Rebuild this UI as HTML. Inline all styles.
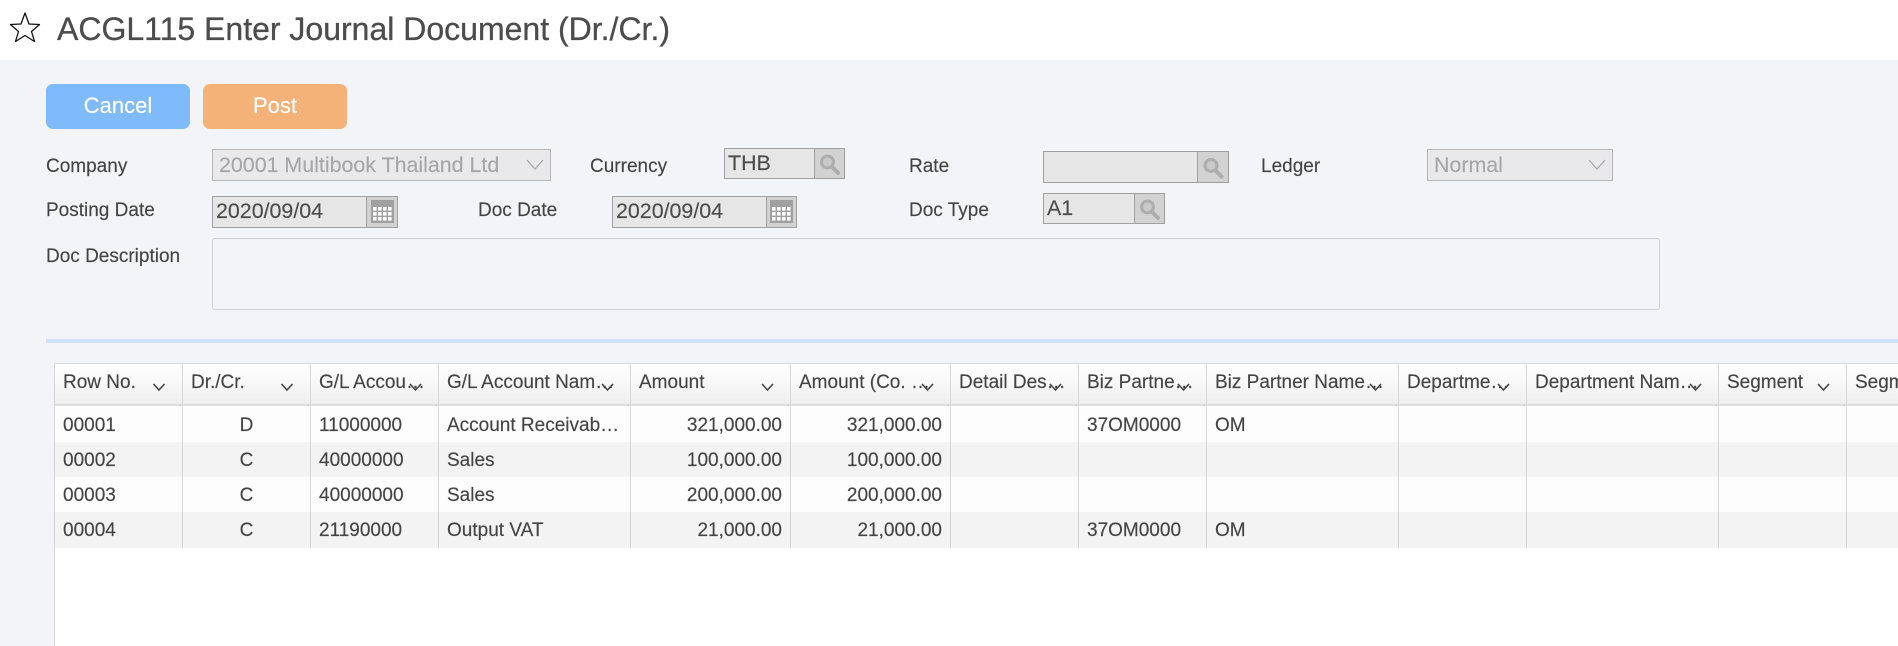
<!DOCTYPE html>
<html><head><meta charset="utf-8"><title>ACGL115</title>
<style>
html,body{margin:0;padding:0;width:1898px;height:646px;overflow:hidden;background:#f3f4f8;}
body{position:relative;font-family:"Liberation Sans",Arial,sans-serif;color:#444;font-size:19px;-webkit-text-stroke:0.15px currentColor;}
.a{position:absolute;box-sizing:border-box;white-space:nowrap;}
.lb{position:absolute;white-space:nowrap;line-height:24px;height:24px;color:#444;font-size:19px;}
.btn{position:absolute;top:84px;height:45px;width:144px;border-radius:7px;color:#fff;font-size:22px;line-height:43px;text-align:center;}
.inp{position:absolute;box-sizing:border-box;background:#e6e6e6;border:1px solid #a0a0a0;font-size:21.4px;color:#4c4c4c;padding-left:3px;white-space:nowrap;}
.ib{position:absolute;box-sizing:border-box;background:#d2d2d2;border:1px solid #a0a0a0;}
.sel{position:absolute;box-sizing:border-box;background:#e9e9eb;border:1px solid #b6b6b6;font-size:21.4px;color:#a6a6a6;padding-left:6px;line-height:30px;white-space:nowrap;}
.hc{position:absolute;top:365px;height:40px;font-size:19px;line-height:36px;padding-left:8px;box-sizing:border-box;white-space:nowrap;overflow:hidden;text-overflow:ellipsis;color:#444;}
.vh{position:absolute;top:364px;height:41px;width:1px;background:#d9d9d9;}
.v{position:absolute;top:407px;height:141px;width:1px;background:#d6d6d6;}
.r{position:absolute;left:55px;width:1843px;height:35px;}
.c{position:absolute;height:35px;line-height:37px;font-size:19px;white-space:nowrap;color:#444;}
svg{position:absolute;overflow:visible;}
</style></head><body>

<div class="a" style="left:0;top:0;width:1898px;height:60px;background:#fff;"></div>
<svg style="left:0;top:0" width="50" height="50"><polygon points="25,13 29,24 39.5,24.500 31.5,31.500 34.500,41.500 25,35.500 15.500,41.500 18.500,31.500 10.500,24.500 21,24" fill="none" stroke="#111" stroke-width="1.3" stroke-linejoin="round"/></svg>
<div class="a" style="left:57px;top:9px;font-size:32px;line-height:40px;color:#4c4c4c;-webkit-text-stroke:0.3px #4c4c4c;">ACGL115 Enter Journal Document (Dr./Cr.)</div>

<div class="btn" style="left:46px;background:#7fbafb;">Cancel</div>
<div class="btn" style="left:203px;background:#f4b278;">Post</div>

<div class="lb" style="left:46px;top:155px;">Company</div>
<div class="sel" style="left:212px;top:149px;width:339px;height:32px;">20001 Multibook Thailand Ltd</div>
<svg style="left:526px;top:159px" width="18" height="12"><path d="M1 1 L9 10 L17 1" fill="none" stroke="#a8a8a8" stroke-width="1.3"/></svg>

<div class="lb" style="left:590px;top:155px;">Currency</div>
<div class="inp" style="left:724px;top:148px;width:91px;height:31px;line-height:28px;">THB</div>
<div class="ib" style="left:814px;top:148px;width:31px;height:31px;"></div>
<svg style="left:814px;top:148px" width="31" height="31"><circle cx="13.500" cy="14" r="6" fill="#c9c9c9" stroke="#adadad" stroke-width="3"/><path d="M18 19 L24 25" stroke="#adadad" stroke-width="4" stroke-linecap="round"/></svg>

<div class="lb" style="left:909px;top:155px;">Rate</div>
<div class="inp" style="left:1043px;top:151px;width:155px;height:32px;"></div>
<div class="ib" style="left:1197px;top:151px;width:32px;height:32px;"></div>
<svg style="left:1197px;top:151px" width="32" height="32"><circle cx="14" cy="14.500" r="6" fill="#c9c9c9" stroke="#adadad" stroke-width="3"/><path d="M18.500 19.500 L24.500 25.500" stroke="#adadad" stroke-width="4" stroke-linecap="round"/></svg>

<div class="lb" style="left:1261px;top:155px;">Ledger</div>
<div class="sel" style="left:1427px;top:149px;width:186px;height:32px;">Normal</div>
<svg style="left:1588px;top:159px" width="18" height="12"><path d="M1 1 L9 10 L17 1" fill="none" stroke="#a8a8a8" stroke-width="1.3"/></svg>

<div class="lb" style="left:46px;top:199px;">Posting Date</div>
<div class="inp" style="left:212px;top:196px;width:155px;height:32px;line-height:29px;">2020/09/04</div>
<div class="ib" style="left:366px;top:196px;width:32px;height:32px;"></div>
<svg style="left:366px;top:196px" width="32" height="32"><rect x="5" y="4" width="23" height="23" fill="#a0a0a0"/><g fill="#fff"><rect x="7" y="11" width="3.600" height="3.600"/><rect x="12" y="11" width="3.600" height="3.600"/><rect x="17" y="11" width="3.600" height="3.600"/><rect x="22" y="11" width="3.600" height="3.600"/><rect x="7" y="16" width="3.600" height="3.600"/><rect x="12" y="16" width="3.600" height="3.600"/><rect x="17" y="16" width="3.600" height="3.600"/><rect x="22" y="16" width="3.600" height="3.600"/><rect x="7" y="21" width="3.600" height="3.600"/><rect x="12" y="21" width="3.600" height="3.600"/><rect x="17" y="21" width="3.600" height="3.600"/><rect x="22" y="21" width="3.600" height="3.600"/></g></svg>

<div class="lb" style="left:478px;top:199px;">Doc Date</div>
<div class="inp" style="left:612px;top:196px;width:155px;height:32px;line-height:29px;">2020/09/04</div>
<div class="ib" style="left:766px;top:196px;width:31px;height:32px;"></div>
<svg style="left:766px;top:196px" width="31" height="32"><rect x="4" y="4" width="23" height="23" fill="#a0a0a0"/><g fill="#fff"><rect x="6" y="11" width="3.600" height="3.600"/><rect x="11" y="11" width="3.600" height="3.600"/><rect x="16" y="11" width="3.600" height="3.600"/><rect x="21" y="11" width="3.600" height="3.600"/><rect x="6" y="16" width="3.600" height="3.600"/><rect x="11" y="16" width="3.600" height="3.600"/><rect x="16" y="16" width="3.600" height="3.600"/><rect x="21" y="16" width="3.600" height="3.600"/><rect x="6" y="21" width="3.600" height="3.600"/><rect x="11" y="21" width="3.600" height="3.600"/><rect x="16" y="21" width="3.600" height="3.600"/><rect x="21" y="21" width="3.600" height="3.600"/></g></svg>

<div class="lb" style="left:909px;top:199px;">Doc Type</div>
<div class="inp" style="left:1043px;top:193px;width:92px;height:31px;line-height:28px;">A1</div>
<div class="ib" style="left:1134px;top:193px;width:31px;height:31px;"></div>
<svg style="left:1134px;top:193px" width="31" height="31"><circle cx="13.500" cy="14" r="6" fill="#c9c9c9" stroke="#adadad" stroke-width="3"/><path d="M18 19 L24 25" stroke="#adadad" stroke-width="4" stroke-linecap="round"/></svg>

<div class="lb" style="left:46px;top:245px;">Doc Description</div>
<div class="a" style="left:212px;top:238px;width:1448px;height:72px;border:1px solid #cfcfcf;border-radius:3px;background:#f3f4f8;"></div>

<div class="a" style="left:46px;top:339px;width:1852px;height:4px;background:#cfe0f6;"></div>

<!-- table -->
<div class="a" style="left:54px;top:363px;width:1844px;height:283px;background:#fff;border-left:1px solid #d6d6da;border-top:1px solid #d9d9d9;"></div>
<div class="a" style="left:55px;top:364px;width:1843px;height:42px;background:linear-gradient(#ffffff,#efefef);border-bottom:2px solid #dcdcdc;"></div>

<div class="r" style="top:407px;background:#fdfdfd;"></div>
<div class="r" style="top:442px;background:#f3f3f3;"></div>
<div class="r" style="top:477px;background:#fdfdfd;"></div>
<div class="r" style="top:512px;height:36px;background:#f3f3f3;"></div>

<div class="vh" style="left:182px"></div><div class="vh" style="left:310px"></div><div class="vh" style="left:438px"></div><div class="vh" style="left:630px"></div><div class="vh" style="left:790px"></div><div class="vh" style="left:950px"></div><div class="vh" style="left:1078px"></div><div class="vh" style="left:1206px"></div><div class="vh" style="left:1398px"></div><div class="vh" style="left:1526px"></div><div class="vh" style="left:1718px"></div><div class="vh" style="left:1846px"></div>
<div class="v" style="left:182px"></div><div class="v" style="left:310px"></div><div class="v" style="left:438px"></div><div class="v" style="left:630px"></div><div class="v" style="left:790px"></div><div class="v" style="left:950px"></div><div class="v" style="left:1078px"></div><div class="v" style="left:1206px"></div><div class="v" style="left:1398px"></div><div class="v" style="left:1526px"></div><div class="v" style="left:1718px"></div><div class="v" style="left:1846px"></div>

<div class="hc" style="left:55px;width:127px;">Row No.</div>
<div class="hc" style="left:183px;width:127px;">Dr./Cr.</div>
<div class="hc" style="left:311px;width:116px;">G/L Account Number</div>
<div class="hc" style="left:439px;width:181px;">G/L Account Name Text</div>
<div class="hc" style="left:631px;width:149px;">Amount</div>
<div class="hc" style="left:791px;width:147px;">Amount (Co. Currency)</div>
<div class="hc" style="left:951px;width:116px;">Detail Description</div>
<div class="hc" style="left:1079px;width:116px;">Biz Partner Code</div>
<div class="hc" style="left:1207px;width:181px;">Biz Partner Name Text</div>
<div class="hc" style="left:1399px;width:115px;">Department Code</div>
<div class="hc" style="left:1527px;width:180px;">Department Name Text</div>
<div class="hc" style="left:1719px;width:127px;">Segment</div>
<div class="hc" style="left:1847px;width:51px;padding-right:0;text-overflow:clip;">Segment Name</div>

<svg style="left:0;top:0" width="1898" height="646"><g fill="none" stroke="#444" stroke-width="1.6"><path d="M153.500 384 L159 390 L164.500 384"/><path d="M281.500 384 L287 390 L292.500 384"/><path d="M410 384 L415.500 390 L421 384"/><path d="M602 384 L607.500 390 L613 384"/><path d="M762 384 L767.500 390 L773 384"/><path d="M922 384 L927.500 390 L933 384"/><path d="M1050 384 L1055.500 390 L1061 384"/><path d="M1178 384 L1183.500 390 L1189 384"/><path d="M1370 384 L1375.500 390 L1381 384"/><path d="M1498 384 L1503.500 390 L1509 384"/><path d="M1690 384 L1695.500 390 L1701 384"/><path d="M1818 384 L1823.500 390 L1829 384"/></g></svg>

<div class="c" style="left:63px;top:407px;">00001</div><div class="c" style="left:183px;width:127px;text-align:center;top:407px;">D</div><div class="c" style="left:319px;top:407px;">11000000</div><div class="c" style="left:447px;top:407px;width:175px;overflow:hidden;text-overflow:ellipsis;">Account Receivable Trade</div><div class="c" style="right:1116px;top:407px;">321,000.00</div><div class="c" style="right:956px;top:407px;">321,000.00</div><div class="c" style="left:1087px;top:407px;">37OM0000</div><div class="c" style="left:1215px;top:407px;">OM</div>

<div class="c" style="left:63px;top:442px;">00002</div><div class="c" style="left:183px;width:127px;text-align:center;top:442px;">C</div><div class="c" style="left:319px;top:442px;">40000000</div><div class="c" style="left:447px;top:442px;">Sales</div><div class="c" style="right:1116px;top:442px;">100,000.00</div><div class="c" style="right:956px;top:442px;">100,000.00</div>

<div class="c" style="left:63px;top:477px;">00003</div><div class="c" style="left:183px;width:127px;text-align:center;top:477px;">C</div><div class="c" style="left:319px;top:477px;">40000000</div><div class="c" style="left:447px;top:477px;">Sales</div><div class="c" style="right:1116px;top:477px;">200,000.00</div><div class="c" style="right:956px;top:477px;">200,000.00</div>

<div class="c" style="left:63px;top:512px;">00004</div><div class="c" style="left:183px;width:127px;text-align:center;top:512px;">C</div><div class="c" style="left:319px;top:512px;">21190000</div><div class="c" style="left:447px;top:512px;">Output VAT</div><div class="c" style="right:1116px;top:512px;">21,000.00</div><div class="c" style="right:956px;top:512px;">21,000.00</div><div class="c" style="left:1087px;top:512px;">37OM0000</div><div class="c" style="left:1215px;top:512px;">OM</div>

</body></html>
